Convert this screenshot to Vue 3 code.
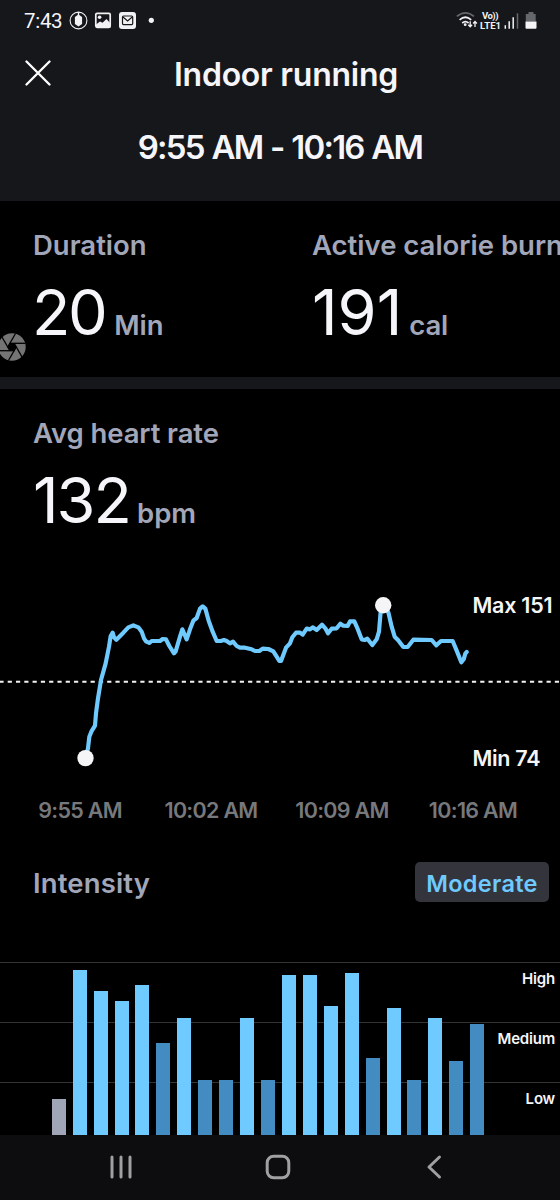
<script setup>
import { ref } from 'vue'

const stats = ref([
  { label: 'Duration', value: '20', unit: 'Min', size: 'tight' },
  { label: 'Active calorie burn', value: '191', unit: 'cal', size: 'loose' }
])

const times = ['9:55 AM', '10:02 AM', '10:09 AM', '10:16 AM']
const levels = ['High', 'Medium', 'Low']

// height in px, zone sets the colour
const bars = ref([
  { height: 36, zone: 'rest' },
  { height: 165.4, zone: 'high' },
  { height: 143.6, zone: 'high' },
  { height: 133.6, zone: 'high' },
  { height: 150.2, zone: 'high' },
  { height: 92.2, zone: 'medium' },
  { height: 116.8, zone: 'high' },
  { height: 55.2, zone: 'medium' },
  { height: 55.2, zone: 'medium' },
  { height: 116.8, zone: 'high' },
  { height: 55.2, zone: 'medium' },
  { height: 160.2, zone: 'high' },
  { height: 160.2, zone: 'high' },
  { height: 128.6, zone: 'high' },
  { height: 162, zone: 'high' },
  { height: 76.6, zone: 'medium' },
  { height: 126.8, zone: 'high' },
  { height: 55.2, zone: 'medium' },
  { height: 116.8, zone: 'high' },
  { height: 73.8, zone: 'medium' },
  { height: 111, zone: 'medium' }
])

const heartRate =
  '77,534 84,505 88,470 94,455 105,437 108,400 114,355 123,300 137,250 147,200 152,168 158,158 162,172 169,179 178,170 190,158 205,142 220,136 235,142 245,155 252,175 258,184 268,189 275,183 300,183 308,177 318,178 328,198 342,220 347,214 360,170 367,148 373,162 380,178 390,148 400,122 410,114 420,86 428,79 436,86 446,122 458,155 470,183 482,183 492,180 500,183 510,190 519,185 530,198 540,203 555,203 575,208 585,213 598,213 608,206 625,207 640,214 650,230 658,243 663,243 678,203 690,190 697,172 708,158 720,158 728,164 740,146 750,148 758,142 770,150 786,134 796,145 804,160 815,146 830,145 841,131 850,137 863,138 870,124 883,124 891,142 905,178 915,180 922,176 937,195 950,178 957,155 962,95 970,75 985,97 995,140 1004,170 1014,180 1030,201 1043,201 1060,179 1115,180 1129,196 1143,183 1178,183 1190,212 1204,247 1211,238 1216,221 1220,216'
</script>

<template>
  <div class="screen">
    <header class="header">
      <div class="status-bar">
        <span class="clock">7:43</span>
        <svg class="status-left" width="90" height="24" viewBox="0 0 90 24">
          <circle cx="10.5" cy="12.5" r="8.4" fill="none" stroke="#f2f2f4" stroke-width="1.1" />
          <path d="M10.5 4v4" stroke="#f2f2f4" stroke-width="1.4" />
          <path d="M10.5 6.5l3.6 2.6v6.8l-3.6 2.7-3.6-2.7V9.1z" fill="#f2f2f4" />
          <rect x="27.8" y="5.3" width="14.4" height="14" rx="1.3" fill="none" stroke="#f2f2f4" stroke-width="1.7" />
          <circle cx="31.6" cy="9.2" r="1.8" fill="#f2f2f4" />
          <path d="M28 16.5l4-3 2.5 1.3 4-3.8 4 4.5v4H28z" fill="#f2f2f4" />
          <rect x="51" y="4" width="17" height="17" rx="3" fill="#f2f2f4" />
          <rect x="54.5" y="8" width="10.2" height="8.6" rx="1" fill="none" stroke="#17181b" stroke-width="1.2" />
          <path d="M55 9l4.6 4 4.6-4" fill="none" stroke="#17181b" stroke-width="1.2" />
          <circle cx="83.3" cy="12.3" r="2.6" fill="#f2f2f4" />
        </svg>
        <svg class="status-right" width="84" height="24" viewBox="0 0 84 24">
          <g fill="none" stroke="#f2f2f4" stroke-width="1.7">
            <path d="M.8 8.4Q9.5 1.2 18 8.4" stroke="#66676a" />
            <path d="M3.6 11.8Q9.4 6.7 15.2 11.8" />
            <path d="M6.2 15Q9.4 12.4 12.6 15" />
            <path d="M14.2 13.2v5.3M12.3 16.7l1.9 2 1.9-2M19 19v-5.3M17.1 15.5l1.9-2 1.9 2" stroke-width="1.3" />
          </g>
          <circle cx="9.2" cy="16.7" r="1.4" fill="#f2f2f4" />
          <text x="26" y="11.3" textLength="16.5" class="volte">Vo))</text>
          <text x="24" y="20.6" textLength="21" class="volte">LTE1</text>
          <path d="M49.3 20.7v-3.4M53.2 20.7v-7.4M57.2 20.7v-11.4" stroke="#f2f2f4" stroke-width="1.5" />
          <path d="M61.5 20.7V5.3" stroke="#66676a" stroke-width="1.5" />
          <path d="M72.5 4h5v2h2.2v7.5h-9.9V6h2.7z" fill="#66676a" />
          <path d="M69.5 13.5h11v6.3a1 1 0 0 1-1 1h-9a1 1 0 0 1-1-1z" fill="#f5f5f7" />
        </svg>
      </div>
      <div class="title-bar">
        <svg class="close" width="26" height="26" viewBox="0 0 26 26">
          <path d="M1.5 1.5l23 23M24.5 1.5l-23 23" stroke="#fff" stroke-width="2.3" stroke-linecap="round" />
        </svg>
        <h1>Indoor running</h1>
      </div>
      <h2>9:55 AM - 10:16 AM</h2>
    </header>

    <section class="stats">
      <div v-for="stat in stats" :key="stat.label" class="stat">
        <p class="label">{{ stat.label }}</p>
        <p class="reading" :class="stat.size">
          <span class="value">{{ stat.value }}</span>
          <span class="unit">{{ stat.unit }}</span>
        </p>
      </div>
      <svg class="shutter" width="28" height="28" viewBox="-14 -14 28 28">
        <circle r="13.7" fill="#747474" />
        <path d="M4.5 0L2.25 3.9H-2.25L-4.5 0L-2.25-3.9H2.25z" fill="#000" />
        <g stroke="#000" stroke-width="1.3">
          <path v-for="n in 6" :key="n" d="M-2.5-3.7H13.5" :transform="`rotate(${n * 60})`" />
        </g>
      </svg>
    </section>

    <section class="heart">
      <p class="label narrow">Avg heart rate</p>
      <p class="reading">
        <span class="value">132</span>
        <span class="unit">bpm</span>
      </p>
    </section>

    <svg class="heart-chart" width="560" height="200" viewBox="0 0 560 200">
      <path d="M-.6 101.7H560" stroke="#f2f2f2" stroke-width="1.9" stroke-dasharray="4.2 4.09" />
      <g transform="translate(60 0) scale(.33333)">
        <polyline :points="heartRate" class="heart-line" />
      </g>
      <circle cx="85.5" cy="178.1" r="8.2" fill="#f5f5f7" />
      <circle cx="383.2" cy="25.2" r="8.2" fill="#f5f5f7" />
      <text x="472.5" y="33.4" textLength="80" class="limit">Max 151</text>
      <text x="472.5" y="185.8" textLength="68" class="limit">Min 74</text>
    </svg>
    <div class="times">
      <span v-for="time in times" :key="time">{{ time }}</span>
    </div>

    <div class="intensity-head">
      <p class="label">Intensity</p>
      <span class="badge">Moderate</span>
    </div>

    <section class="intensity-chart">
      <div class="levels">
        <div v-for="level in levels" :key="level" class="level">{{ level }}</div>
      </div>
      <div class="bars">
        <div
          v-for="(bar, i) in bars"
          :key="i"
          class="bar"
          :class="bar.zone"
          :style="{ height: bar.height + 'px' }"
        ></div>
      </div>
    </section>

    <nav class="nav">
      <svg width="24" height="26" viewBox="0 0 24 26">
        <path d="M3 3v20M12 3v20M21 3v20" />
      </svg>
      <svg class="home" width="26" height="26" viewBox="0 0 26 26">
        <rect x="2.2" y="2.2" width="21.6" height="21.6" rx="6.5" />
      </svg>
      <svg width="16" height="26" viewBox="0 0 16 26">
        <path d="M13.5 3L3 13l10.5 10" />
      </svg>
    </nav>
  </div>
</template>

<style>
body {
  margin: 0;
  background: #000;
}
</style>

<style scoped>
.screen {
  width: 560px;
  height: 1200px;
  overflow: hidden;
  display: flex;
  flex-direction: column;
  background: #000;
  color: #f5f5fa;
  font-family: Inter, 'Liberation Sans', sans-serif;
}

h1,
h2,
p {
  margin: 0;
  font-weight: 600;
}

.header {
  height: 201px;
  background: #16171a;
}

.status-bar {
  height: 40px;
  padding: 0 20px 0 24px;
  display: flex;
}

.clock {
  width: 44px;
  font: 400 20.5px/43px Roboto, sans-serif;
  letter-spacing: -0.3px;
}

.status-left {
  margin-top: 8px;
}

.status-right {
  margin: 8px 0 0 auto;
}

.volte {
  font: 700 9.5px Roboto, sans-serif;
  fill: #f2f2f4;
}

.title-bar {
  height: 70px;
  padding: 0 13px 0 25px;
  display: grid;
  grid-template-columns: 26px 1fr 26px;
  align-items: center;
}

.close {
  margin-bottom: 5px;
}

h1 {
  text-align: center;
  font-size: 32px;
  line-height: 70px;
  letter-spacing: -0.25px;
}

h2 {
  text-align: center;
  font-size: 33px;
  line-height: 75px;
  letter-spacing: -1.8px;
  word-spacing: 1.2px;
}

.stats {
  position: relative;
  height: 162px;
  padding: 14px 0 0 33px;
  display: grid;
  grid-template-columns: 279px 300px;
  overflow: hidden;
  border-bottom: 12px solid #16171a;
}

.stat,
.label {
  white-space: nowrap;
}

.label {
  font-size: 27.5px;
  line-height: 60px;
  font-weight: 600;
  color: #a2a6b9;
}

.label.narrow {
  letter-spacing: -0.1px;
}

.reading {
  display: flex;
  align-items: baseline;
  gap: 7px;
  line-height: 75px;
}

.value {
  font-size: 63px;
  font-weight: 400;
  letter-spacing: -2px;
}

.tight {
  gap: 9px;
}

.tight .value {
  margin-left: -1px;
  letter-spacing: -2.5px;
}

.loose .value {
  letter-spacing: 0;
}

.unit {
  font-size: 27.5px;
  font-weight: 600;
  color: #a2a6b9;
}

.loose .unit {
  letter-spacing: -0.2px;
}

.shutter {
  position: absolute;
  left: -2px;
  top: 132px;
}

.heart {
  height: 177px;
  padding: 14px 0 0 33px;
}

.heart-chart {
  flex: none;
}

.heart-line {
  fill: none;
  stroke: #6ecaff;
  stroke-width: 12.5;
  stroke-linejoin: round;
  stroke-linecap: round;
}

.limit {
  font-size: 21.5px;
  font-weight: 600;
  fill: #f5f5f7;
}

.times {
  height: 60px;
  margin-left: 14.5px;
  display: grid;
  grid-template-columns: repeat(4, 131px);
  text-align: center;
  font-size: 21.5px;
  line-height: 60px;
  font-weight: 600;
  letter-spacing: -0.7px;
  color: #77787c;
}

.intensity-head {
  height: 122px;
  padding: 0 11px 0 33px;
  box-sizing: border-box;
  display: flex;
  justify-content: space-between;
  align-items: flex-start;
}

.intensity-head .label {
  line-height: 87px;
  letter-spacing: 0.15px;
}

.badge {
  width: 134px;
  height: 40px;
  margin-top: 22px;
  border-radius: 5px;
  background: #33343c;
  color: #6ecaff;
  text-align: center;
  font-size: 23.5px;
  line-height: 43px;
  font-weight: 600;
  letter-spacing: 0.3px;
}

.intensity-chart {
  flex: none;
  height: 173px;
  display: grid;
}

.levels,
.bars {
  grid-area: 1 / 1;
}

.level {
  height: 60px;
  box-sizing: border-box;
  padding-right: 5px;
  border-top: 1px solid #333;
  text-align: right;
  font-size: 15px;
  line-height: 31px;
  font-weight: 600;
  letter-spacing: -0.2px;
}

.level:last-child {
  height: 53px;
}

.bars {
  position: relative;
  padding-left: 51.8px;
  display: flex;
  align-items: flex-end;
  gap: 6.93px;
}

.bar {
  width: 14px;
}

.rest {
  background: #a1a5b8;
}

.medium {
  background: #438cc2;
}

.high {
  background: #6ecaff;
}

.nav {
  height: 64px;
  padding: 0 118px 1px 109px;
  display: flex;
  justify-content: space-between;
  align-items: center;
  background: #0d0d0f;
}

.home {
  margin-right: 4px;
}

.nav svg {
  fill: none;
  stroke: #a0a0a2;
  stroke-width: 3;
  stroke-linecap: round;
  stroke-linejoin: round;
}
</style>
